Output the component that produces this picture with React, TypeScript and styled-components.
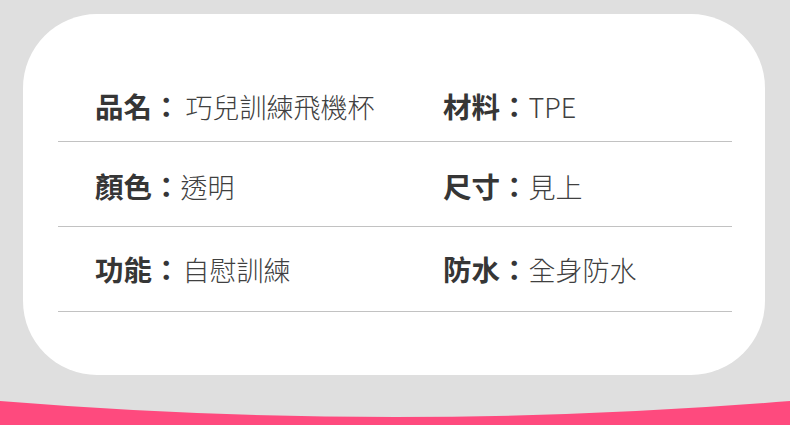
import React from "react";
import styled, { createGlobalStyle } from "styled-components";

const Global = createGlobalStyle`
  html, body { margin: 0; padding: 0; }
  body {
    width: 790px;
    height: 425px;
    overflow: hidden;
    background: #dfdfdf;
    font-family: "Noto Sans CJK TC", "Noto Sans", sans-serif;
  }
`;

const Page = styled.div`
  width: 790px;
  height: 425px;
  display: flex;
  flex-direction: column;
  background: #dfdfdf;
`;

const Card = styled.div`
  margin: 14px 25px 0 23px;
  width: 742px;
  height: 361px;
  box-sizing: border-box;
  background: #ffffff;
  border-radius: 74px / 74px;
  padding: 43px 33px 0 35px;
`;

const Table = styled.div`
  display: flex;
  flex-direction: column;
`;

const Row = styled.div<{ $pad: number }>`
  height: 85px;
  box-sizing: border-box;
  display: grid;
  grid-template-columns: 348px 1fr;
  align-items: start;
  padding: ${(p) => p.$pad}px 0 0 37px;
  border-bottom: 1px solid #c2c2c2;
`;

const Cell = styled.div`
  display: flex;
  align-items: baseline;
  white-space: nowrap;
  color: #3a3a3a;
`;

const Label = styled.span`
  font-size: 28.5px;
  font-weight: 700;
  color: #363636;
  line-height: 36px;
`;

const Value = styled.span<{ $gap: number }>`
  margin-left: ${(p) => p.$gap}px;
  font-size: 27px;
  font-weight: 300;
  color: #404040;
  line-height: 36px;
`;

const Wave = styled.svg`
  display: block;
  width: 790px;
  height: 50px;
`;

type Item = { k: string; v: string; gap?: number };

const rows: { pad: number; items: Item[] }[] = [
  { pad: 31, items: [{ k: "品名", v: "巧兒訓練飛機杯", gap: 5 }, { k: "材料", v: "TPE" }] },
  { pad: 26, items: [{ k: "顏色", v: "透明" }, { k: "尺寸", v: "見上" }] },
  { pad: 24, items: [{ k: "功能", v: "自慰訓練", gap: 2 }, { k: "防水", v: "全身防水" }] },
];

export default function App() {
  return (
    <>
      <Global />
      <Page>
        <Card>
          <Table>
            {rows.map((r, i) => (
              <Row key={i} $pad={r.pad}>
                {r.items.map((it) => (
                  <Cell key={it.k}>
                    <Label>{it.k}：</Label>
                    <Value $gap={it.gap ?? 0}>{it.v}</Value>
                  </Cell>
                ))}
              </Row>
            ))}
          </Table>
        </Card>
        <Wave viewBox="0 0 790 50" preserveAspectRatio="none">
          <path d="M0 26 Q395 58 790 26 L790 50 L0 50 Z" fill="#fe4a7e" />
        </Wave>
      </Page>
    </>
  );
}
